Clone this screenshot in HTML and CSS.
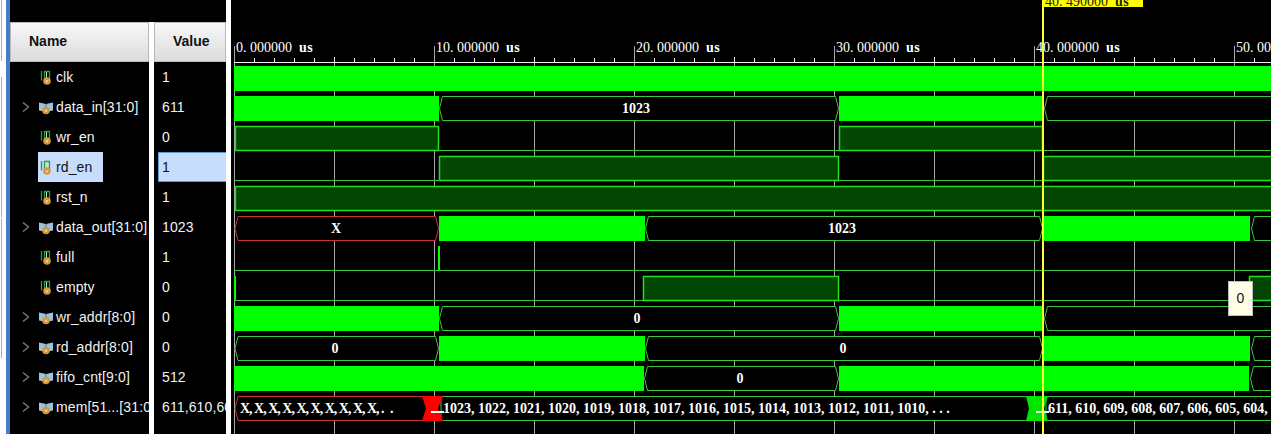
FILE: index.html
```html
<!DOCTYPE html>
<html lang="en">
<head>
    <meta charset="UTF-8">
    <title>Waveform - fifo</title>
    <link rel="stylesheet" href="styles.css">
</head>
<body>
    <svg class="defs" width="0" height="0">
        <symbol id="ico-bit" viewBox="0 0 16 16">
            <path d="M3.500 2v9.500M6.500 11V2.500h5V11" fill="none" stroke="#2f9a45" stroke-width="1.300"/>
            <path d="M8.500 3v7" stroke="#bfe3c5"/>
            <circle cx="9" cy="12" r="3.800" fill="#d8963a"/>
            <path d="M7.800 11l1.200 2.400 1.200-2.400" fill="none" stroke="#fbe6b8" stroke-width=".8"/>
        </symbol>
        <symbol id="ico-bus" viewBox="0 0 16 16">
            <path d="M1 3.500l7 1.500 7-1.500v8l-7 1.500-7-1.500z" fill="#9cc3dc"/>
            <path d="M8 5v6" stroke="#56708a"/>
            <circle cx="8" cy="11.500" r="3.800" fill="#d8963a"/>
            <path d="M6.800 10.500l1.200 2.400 1.200-2.400" fill="none" stroke="#fbe6b8" stroke-width=".8"/>
        </symbol>
        <symbol id="ico-more" viewBox="0 0 8 10">
            <path d="M1 .5l5.500 4.500-5.500 4.500" fill="none" stroke="#777" stroke-width="1.400"/>
        </symbol>
    </svg>

    <div class="app">
        <div class="dock">
            <div class="dock-line dock-a"></div>
            <div class="dock-line dock-b"></div>
            <div class="dock-line dock-c"></div>
        </div>
        <div class="accent"></div>

        <div class="signals">
            <div class="signals-top"></div>
            <div class="signals-cols">
                <div class="names">
                    <div class="head">Name</div>
                    <div class="row"><svg class="ico"><use href="#ico-bit"/></svg><span class="label">clk</span></div>
                    <div class="row"><svg class="more"><use href="#ico-more"/></svg><svg class="ico"><use href="#ico-bus"/></svg><span class="label">data_in[31:0]</span></div>
                    <div class="row"><svg class="ico"><use href="#ico-bit"/></svg><span class="label">wr_en</span></div>
                    <div class="row"><div class="tag"><svg class="ico"><use href="#ico-bit"/></svg><span class="label">rd_en</span></div></div>
                    <div class="row"><svg class="ico"><use href="#ico-bit"/></svg><span class="label">rst_n</span></div>
                    <div class="row"><svg class="more"><use href="#ico-more"/></svg><svg class="ico"><use href="#ico-bus"/></svg><span class="label">data_out[31:0]</span></div>
                    <div class="row"><svg class="ico"><use href="#ico-bit"/></svg><span class="label">full</span></div>
                    <div class="row"><svg class="ico"><use href="#ico-bit"/></svg><span class="label">empty</span></div>
                    <div class="row"><svg class="more"><use href="#ico-more"/></svg><svg class="ico"><use href="#ico-bus"/></svg><span class="label">wr_addr[8:0]</span></div>
                    <div class="row"><svg class="more"><use href="#ico-more"/></svg><svg class="ico"><use href="#ico-bus"/></svg><span class="label">rd_addr[8:0]</span></div>
                    <div class="row"><svg class="more"><use href="#ico-more"/></svg><svg class="ico"><use href="#ico-bus"/></svg><span class="label">fifo_cnt[9:0]</span></div>
                    <div class="row"><svg class="more"><use href="#ico-more"/></svg><svg class="ico"><use href="#ico-bus"/></svg><span class="label">mem[51...[31:0]</span></div>
                </div>
                <div class="values">
                    <div class="head">Value</div>
                    <div class="val">1</div>
                    <div class="val">611</div>
                    <div class="val">0</div>
                    <div class="val val-selected">1</div>
                    <div class="val">1</div>
                    <div class="val">1023</div>
                    <div class="val">1</div>
                    <div class="val">0</div>
                    <div class="val">0</div>
                    <div class="val">0</div>
                    <div class="val">512</div>
                    <div class="val">611,610,609,608</div>
                </div>
            </div>
        </div>

        <div class="wave">
            <svg class="wave-svg" viewBox="231 0 1040 434" width="1040" height="434">
                <!-- grid -->
                <path class="grid" d="M234.500 46V434M334.500 62V434M434.500 46V434M534.500 62V434M634.500 46V434M734.500 62V434M834.500 46V434M934.500 62V434M1034.500 46V434M1134.500 62V434M1234.500 46V434"/>

                <!-- ruler -->
                <path class="ruler" d="M234 62.500H1271"/>
                <path class="ruler" d="M254.500 58V62M274.500 58V62M294.500 58V62M314.500 58V62M334.500 57V62M354.500 58V62M374.500 58V62M394.500 58V62M414.500 58V62
                    M454.500 58V62M474.500 58V62M494.500 58V62M514.500 58V62M534.500 57V62M554.500 58V62M574.500 58V62M594.500 58V62M614.500 58V62
                    M654.500 58V62M674.500 58V62M694.500 58V62M714.500 58V62M734.500 57V62M754.500 58V62M774.500 58V62M794.500 58V62M814.500 58V62
                    M854.500 58V62M874.500 58V62M894.500 58V62M914.500 58V62M934.500 57V62M954.500 58V62M974.500 58V62M994.500 58V62M1014.500 58V62
                    M1054.500 58V62M1074.500 58V62M1094.500 58V62M1114.500 58V62M1134.500 57V62M1154.500 58V62M1174.500 58V62M1194.500 58V62M1214.500 58V62M1254.500 58V62"/>
                <text class="tick" x="236" y="52">0<tspan class="dot">.</tspan>000000 <tspan class="unit">us</tspan></text>
                <text class="tick" x="436" y="52">10<tspan class="dot">.</tspan>000000 <tspan class="unit">us</tspan></text>
                <text class="tick" x="636" y="52">20<tspan class="dot">.</tspan>000000 <tspan class="unit">us</tspan></text>
                <text class="tick" x="836" y="52">30<tspan class="dot">.</tspan>000000 <tspan class="unit">us</tspan></text>
                <text class="tick" x="1036" y="52">40<tspan class="dot">.</tspan>000000 <tspan class="unit">us</tspan></text>
                <text class="tick" x="1236" y="52">50<tspan class="dot">.</tspan>000000 <tspan class="unit">us</tspan></text>

                <!-- clk -->
                <rect class="bar" x="234" y="66" width="1037" height="25"/>

                <!-- data_in -->
                <rect class="bar" x="234" y="96" width="205" height="25"/>
                <polygon class="bus" points="439.500,108.500 442.500,96.500 835.500,96.500 838.500,108.500 835.500,120.500 442.500,120.500"/>
                <text class="num" x="636" y="113">1023</text>
                <rect class="bar" x="839" y="96" width="204" height="25"/>
                <polygon class="bus" points="1044.500,108.500 1047.500,96.500 1275,96.500 1275,120.500 1047.500,120.500"/>

                <!-- wr_en -->
                <path class="lo" d="M439 150.500H839M1043 150.500H1271"/>
                <rect class="hi" x="235.500" y="126.500" width="203" height="24"/>
                <rect class="hi" x="839.500" y="126.500" width="203" height="24"/>

                <!-- rd_en -->
                <path class="lo" d="M234 180.500H439M839 180.500H1043"/>
                <rect class="hi" x="439.500" y="156.500" width="399" height="24"/>
                <rect class="hi" x="1043.500" y="156.500" width="240" height="24"/>

                <!-- rst_n -->
                <rect class="hi" x="235.500" y="186.500" width="1050" height="24"/>

                <!-- data_out -->
                <polygon class="bus bus-x" points="235,228.500 238,216.500 435.500,216.500 438.500,228.500 435.500,240.500 238,240.500"/>
                <text class="num" x="336" y="233">X</text>
                <rect class="bar" x="439" y="216" width="206" height="25"/>
                <polygon class="bus" points="645.500,228.500 648.500,216.500 1039.500,216.500 1042.500,228.500 1039.500,240.500 648.500,240.500"/>
                <text class="num" x="842" y="233">1023</text>
                <rect class="bar" x="1043" y="216" width="207" height="25"/>
                <polygon class="bus" points="1251.500,228.500 1254.500,216.500 1275,216.500 1275,240.500 1254.500,240.500"/>

                <!-- full -->
                <path class="lo" d="M234 270.500H1271"/>
                <rect class="bar" x="438" y="246" width="2" height="24"/>

                <!-- empty -->
                <path class="lo" d="M234 300.500H1271"/>
                <rect class="bar" x="234" y="276" width="2" height="24"/>
                <rect class="hi" x="643.500" y="276.500" width="195" height="24"/>
                <rect class="hi" x="1249.500" y="276.500" width="40" height="24"/>

                <!-- wr_addr -->
                <rect class="bar" x="234" y="306" width="205" height="25"/>
                <polygon class="bus" points="439.500,318.500 442.500,306.500 835.500,306.500 838.500,318.500 835.500,330.500 442.500,330.500"/>
                <text class="num" x="637" y="323">0</text>
                <rect class="bar" x="839" y="306" width="204" height="25"/>
                <polygon class="bus" points="1044.500,318.500 1047.500,306.500 1275,306.500 1275,330.500 1047.500,330.500"/>

                <!-- rd_addr -->
                <polygon class="bus" points="235,348.500 238,336.500 435.500,336.500 438.500,348.500 435.500,360.500 238,360.500"/>
                <text class="num" x="335" y="353">0</text>
                <rect class="bar" x="439" y="336" width="206" height="25"/>
                <polygon class="bus" points="645.500,348.500 648.500,336.500 1039.500,336.500 1042.500,348.500 1039.500,360.500 648.500,360.500"/>
                <text class="num" x="843" y="353">0</text>
                <rect class="bar" x="1043" y="336" width="207" height="25"/>
                <polygon class="bus" points="1251.500,348.500 1254.500,336.500 1275,336.500 1275,360.500 1254.500,360.500"/>

                <!-- fifo_cnt -->
                <rect class="bar" x="234" y="366" width="410" height="25"/>
                <polygon class="bus" points="644.500,378.500 647.500,366.500 835.500,366.500 838.500,378.500 835.500,390.500 647.500,390.500"/>
                <text class="num" x="740" y="383">0</text>
                <rect class="bar" x="839" y="366" width="410" height="25"/>
                <polygon class="bus" points="1250.500,378.500 1253.500,366.500 1275,366.500 1275,390.500 1253.500,390.500"/>

                <!-- mem -->
                <polygon class="bus bus-x" points="235,408.500 238,396.500 424,396.500 427,408.500 424,420.500 238,420.500"/>
                <polygon class="bus" points="441,396.500 1028,396.500 1031,408.500 1028,420.500 441,420.500"/>
                <polygon class="bus" points="1046,396.500 1275,396.500 1275,420.500 1046,420.500"/>
                <polygon class="cross-x" points="422,396 443,396 438,408.500 443,421 422,421 426,408.500"/>
                <polygon class="cross" points="1026,396 1048,396 1044,408.500 1048,421 1026,421 1029,408.500"/>
                <rect class="dash" x="431" y="411" width="13" height="2"/>
                <rect class="dash" x="1036" y="411" width="13" height="2"/>
                <text class="mem mem-x" x="240" y="413">X, X, X, X, X, X, X, X, X, X, <tspan class="more-dots">. .</tspan></text>
                <text class="mem" x="443" y="413">1023, 1022, 1021, 1020, 1019, 1018, 1017, 1016, 1015, 1014, 1013, 1012, 1011, 1010, . . .</text>
                <text class="mem" x="1048" y="413">611, 610, 609, 608, 607, 606, 605, 604, 603,</text>

                <!-- cursor -->
                <rect class="flag" x="1044" y="0" width="99" height="7"/>
                <text class="flag-text" x="1045" y="6">40<tspan class="dot">.</tspan>490000 <tspan class="unit">us</tspan></text>
                <path class="cursor" d="M1043 0V434"/>
            </svg>
            <div class="tip">0</div>
        </div>
    </div>
</body>
</html>
```

FILE: styles.css
```css
body {
    margin: 0;
    background-color: #fff;
    font-family: "Liberation Sans", Arial, sans-serif;
    overflow: hidden;
}
.defs {
    position: absolute;
}
.app {
    display: flex;
    height: 434px;
    overflow: hidden;
    background-color: #fff;
}

/* left edge */
.dock {
    width: 6px;
    background-color: #fff;
}
.dock-line {
    width: 1px;
    margin-left: 1px;
    background-color: #b0b0b0;
}
.dock-a {
    height: 61px;
}
.dock-b {
    height: 140px;
    margin-top: 16px;
}
.dock-c {
    height: 139px;
    margin-top: 2px;
}
.accent {
    width: 4px;
    background-color: #4a7bcb;
}

/* signal list */
.signals {
    width: 216px;
}
.signals-top {
    height: 22px;
    background-color: #000;
}
.signals-cols {
    display: flex;
    gap: 5px;
    background-color: #fff;
    height: 412px;
}
.names {
    width: 139px;
    background-color: #000;
    overflow: hidden;
}
.values {
    width: 72px;
    background-color: #000;
    overflow: hidden;
}
.head {
    box-sizing: border-box;
    height: 40px;
    padding-left: 18px;
    border: 1px solid #b9b9b9;
    background: linear-gradient(#f7f7f7, #dcdcdc);
    color: #111;
    font-size: 14px;
    font-weight: bold;
    line-height: 36px;
}
.row {
    display: flex;
    align-items: center;
    height: 30px;
    padding-left: 28px;
    position: relative;
    white-space: nowrap;
}
.more {
    position: absolute;
    left: 12px;
    top: 10px;
    width: 8px;
    height: 10px;
}
.ico {
    width: 16px;
    height: 16px;
    margin-right: 2px;
    flex: none;
}
.tag {
    display: flex;
    align-items: center;
    height: 30px;
    padding-right: 11px;
    background-color: #c7ddfb;
}
.tag .label {
    color: #111;
}
.label {
    color: #f2f2f2;
    font-size: 14px;
    letter-spacing: .12px;
}
.val {
    box-sizing: border-box;
    height: 30px;
    padding-left: 8px;
    color: #f2f2f2;
    font-size: 14px;
    letter-spacing: .12px;
    line-height: 30px;
    white-space: nowrap;
}
.val-selected {
    margin-left: 4px;
    padding-left: 3px;
    border: 1px solid #5b9bd5;
    border-right: 0;
    background-color: #c7ddfb;
    color: #111;
    line-height: 28px;
}

/* wave area */
.wave {
    position: relative;
    margin-left: 5px;
    width: 1040px;
    background-color: #000;
}
.wave-svg {
    display: block;
}
.grid {
    stroke: #a8a8a8;
    stroke-width: 1;
    fill: none;
}
.ruler {
    stroke: #f0f0f0;
    stroke-width: 1;
    fill: none;
}
.tick,
.num,
.mem,
.flag-text {
    font-family: "Liberation Serif", "Times New Roman", serif;
    font-size: 14px;
}
.tick,
.flag-text {
    word-spacing: 3.5px;
}
.tick {
    fill: #fff;
}
.dot {
    letter-spacing: 3.5px;
}
.unit {
    font-weight: bold;
    letter-spacing: .5px;
}
.bar {
    fill: #00ff00;
}
.bus {
    fill: #000;
    stroke: #3cc83c;
    stroke-width: 1;
}
.bus-x {
    stroke: #c83232;
}
.hi {
    fill: #034503;
    stroke: #20e020;
    stroke-width: 1.500;
}
.lo {
    stroke: #3cc83c;
    stroke-width: 1;
    fill: none;
}
.num {
    fill: #fff;
    font-weight: bold;
    text-anchor: middle;
}
.mem {
    fill: #fff;
    font-weight: bold;
}
.mem-x {
    letter-spacing: -1px;
}
.more-dots {
    letter-spacing: 1px;
}
.cross {
    fill: #00e600;
}
.cross-x {
    fill: #ff0000;
}
.dash {
    fill: #fff;
}
.flag {
    fill: #ffff00;
}
.flag-text {
    fill: #222;
}
.cursor {
    stroke: #ffff33;
    stroke-width: 2;
}
.tip {
    position: absolute;
    left: 997px;
    top: 281px;
    box-sizing: border-box;
    width: 25px;
    height: 35px;
    border: 1px solid #bcbcbc;
    background-color: #ffffe8;
    color: #111;
    font-size: 14px;
    line-height: 33px;
    text-align: center;
}
```
